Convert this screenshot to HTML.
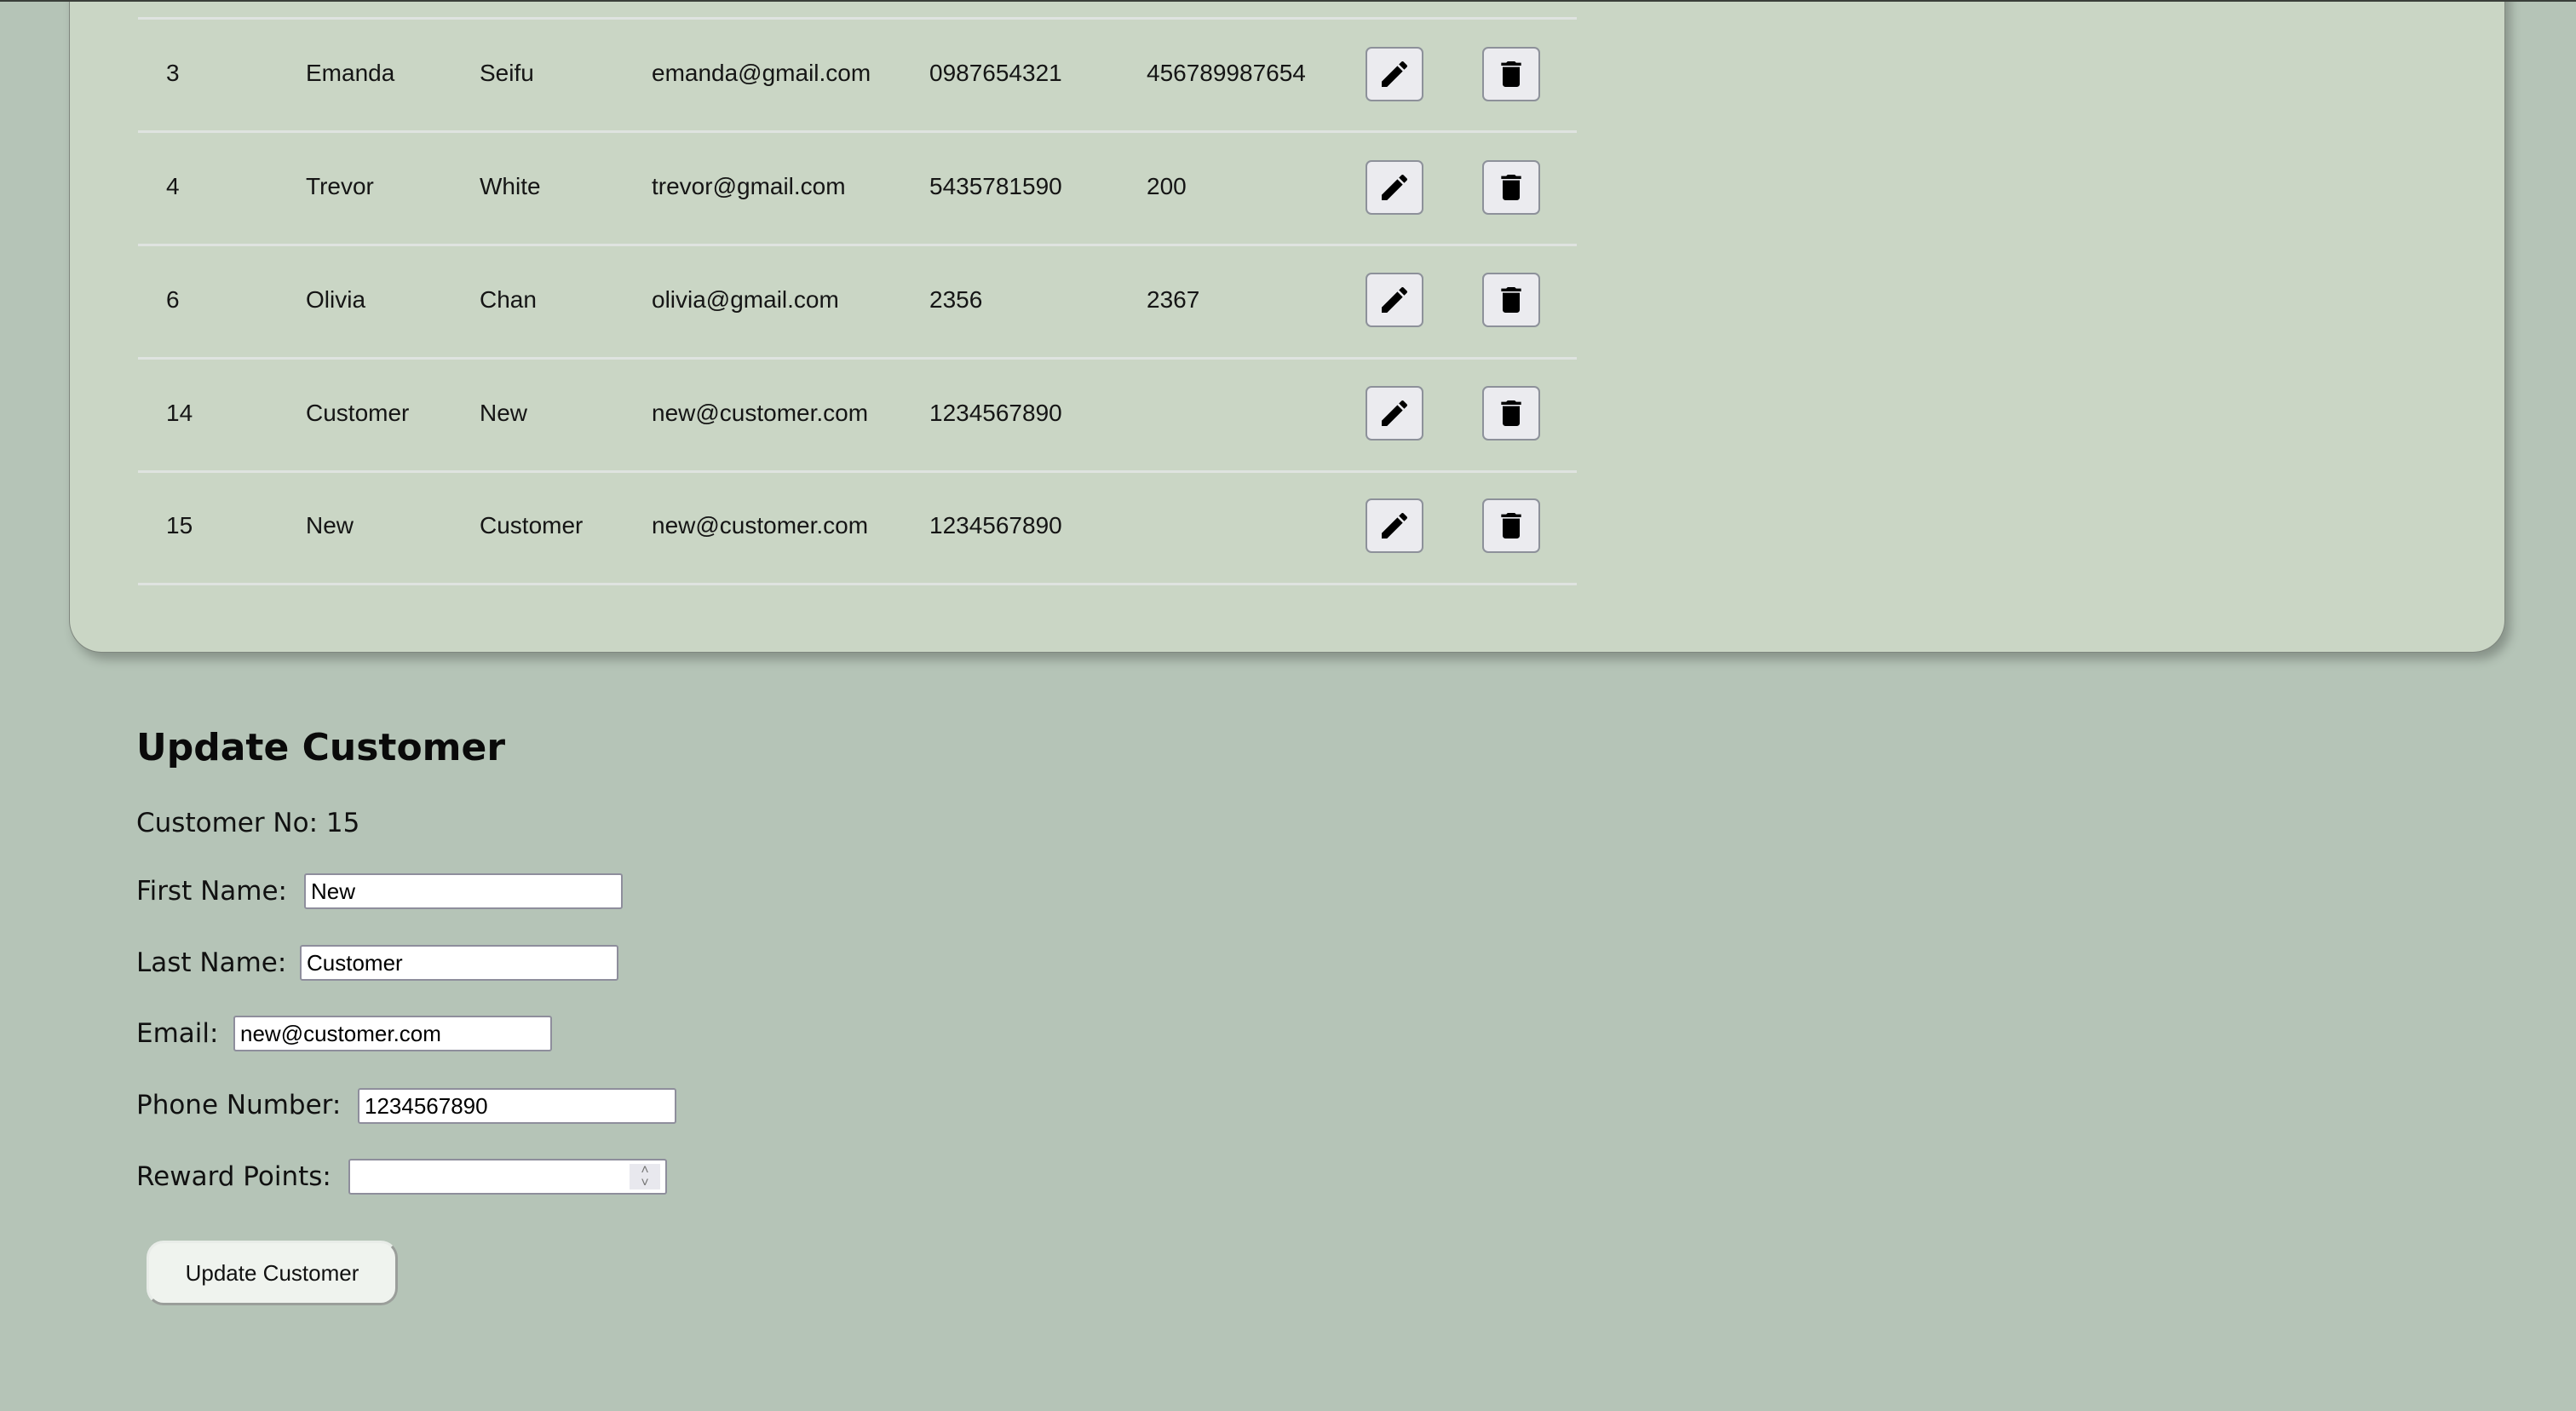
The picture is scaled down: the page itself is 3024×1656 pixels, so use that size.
<!DOCTYPE html>
<html><head><meta charset="utf-8"><style>
html,body{margin:0;padding:0}
body{width:3024px;height:1656px;background:#b5c4b7;position:relative;overflow:hidden;font-family:"Liberation Sans",sans-serif;color:#111}
.topline{position:absolute;left:0;top:0;width:3024px;height:2px;background:#3a3f3a}
.card{position:absolute;left:81px;top:-60px;width:2858px;height:825px;background:#cad6c5;border:1px solid #7f877f;border-top:none;border-radius:0 0 38px 38px;box-shadow:6px 8px 12px rgba(0,0,0,.25)}
.hl{position:absolute;left:162px;width:1689px;height:3px;background:#dfe3e0}
.t{position:absolute;font-size:28px;line-height:32px;color:#151515}
.btn{position:absolute;width:68px;height:64px;background:#ebebef;border:2px solid #8d919a;border-radius:7px;box-sizing:border-box;display:flex;align-items:center;justify-content:center}
.btn svg{width:40px;height:40px}
.f{font-family:"DejaVu Sans",sans-serif;position:absolute;left:160px;font-size:31px;color:#111}
h2{position:absolute;left:160px;top:852px;margin:0;font-family:"DejaVu Sans",sans-serif;font-weight:bold;font-size:44px;color:#0a0a0a}
.in{position:absolute;height:42px;width:374px;box-sizing:border-box;background:#fff;border:2px solid #8e8e9c;border-radius:3px;font-family:"Liberation Sans",sans-serif;font-size:26px;line-height:38px;padding-left:6px;color:#000}
.ub{position:absolute;left:172px;top:1456px;width:295px;height:76px;box-sizing:border-box;background:#eff3ee;border:3px solid #e8ece8;border-right-color:#9a9e9a;border-bottom-color:#9a9e9a;border-radius:20px;font-size:26px;text-align:center;line-height:70px;color:#111}
</style></head><body>
<div class="card"></div>
<div class="topline"></div>

<div class="hl" style="top:20px"></div>
<div class="hl" style="top:153px"></div>
<div class="hl" style="top:286px"></div>
<div class="hl" style="top:419px"></div>
<div class="hl" style="top:552px"></div>
<div class="hl" style="top:684px"></div>

<div class="t" style="left:195px;top:70px">3</div>
<div class="t" style="left:359px;top:70px">Emanda</div>
<div class="t" style="left:563px;top:70px">Seifu</div>
<div class="t" style="left:765px;top:70px">emanda@gmail.com</div>
<div class="t" style="left:1091px;top:70px">0987654321</div>
<div class="t" style="left:1346px;top:70px">456789987654</div>
<div class="t" style="left:195px;top:203px">4</div>
<div class="t" style="left:359px;top:203px">Trevor</div>
<div class="t" style="left:563px;top:203px">White</div>
<div class="t" style="left:765px;top:203px">trevor@gmail.com</div>
<div class="t" style="left:1091px;top:203px">5435781590</div>
<div class="t" style="left:1346px;top:203px">200</div>
<div class="t" style="left:195px;top:336px">6</div>
<div class="t" style="left:359px;top:336px">Olivia</div>
<div class="t" style="left:563px;top:336px">Chan</div>
<div class="t" style="left:765px;top:336px">olivia@gmail.com</div>
<div class="t" style="left:1091px;top:336px">2356</div>
<div class="t" style="left:1346px;top:336px">2367</div>
<div class="t" style="left:195px;top:469px">14</div>
<div class="t" style="left:359px;top:469px">Customer</div>
<div class="t" style="left:563px;top:469px">New</div>
<div class="t" style="left:765px;top:469px">new@customer.com</div>
<div class="t" style="left:1091px;top:469px">1234567890</div>
<div class="t" style="left:195px;top:601px">15</div>
<div class="t" style="left:359px;top:601px">New</div>
<div class="t" style="left:563px;top:601px">Customer</div>
<div class="t" style="left:765px;top:601px">new@customer.com</div>
<div class="t" style="left:1091px;top:601px">1234567890</div>

<div class="btn" style="left:1603px;top:55px"><svg viewBox="0 0 24 24"><path d="M3 17.25V21h3.75L17.81 9.94l-3.75-3.75L3 17.25zM20.71 7.04c.39-.39.39-1.02 0-1.41l-2.34-2.34c-.39-.39-1.02-.39-1.41 0l-1.83 1.83 3.75 3.750 1.83-1.83z"/></svg></div>
<div class="btn" style="left:1740px;top:55px"><svg viewBox="0 0 24 24"><path d="M6 19c0 1.1.9 2 2 2h8c1.1 0 2-.9 2-2V7H6v12zM19 4h-3.5l-1-1h-5l-1 1H5v2h14V4z"/></svg></div>
<div class="btn" style="left:1603px;top:188px"><svg viewBox="0 0 24 24"><path d="M3 17.25V21h3.75L17.81 9.94l-3.75-3.75L3 17.25zM20.71 7.04c.39-.39.39-1.02 0-1.41l-2.34-2.34c-.39-.39-1.02-.39-1.41 0l-1.83 1.83 3.75 3.75 1.83-1.83z"/></svg></div>
<div class="btn" style="left:1740px;top:188px"><svg viewBox="0 0 24 24"><path d="M6 19c0 1.1.9 2 2 2h8c1.1 0 2-.9 2-2V7H6v12zM19 4h-3.5l-1-1h-5l-1 1H5v2h14V4z"/></svg></div>
<div class="btn" style="left:1603px;top:320px"><svg viewBox="0 0 24 24"><path d="M3 17.25V21h3.75L17.81 9.94l-3.75-3.75L3 17.25zM20.71 7.04c.39-.39.39-1.02 0-1.41l-2.34-2.34c-.39-.39-1.02-.39-1.41 0l-1.83 1.83 3.75 3.75 1.83-1.83z"/></svg></div>
<div class="btn" style="left:1740px;top:320px"><svg viewBox="0 0 24 24"><path d="M6 19c0 1.1.9 2 2 2h8c1.1 0 2-.9 2-2V7H6v12zM19 4h-3.5l-1-1h-5l-1 1H5v2h14V4z"/></svg></div>
<div class="btn" style="left:1603px;top:453px"><svg viewBox="0 0 24 24"><path d="M3 17.25V21h3.75L17.81 9.94l-3.75-3.75L3 17.25zM20.71 7.04c.39-.39.39-1.02 0-1.41l-2.34-2.34c-.39-.39-1.02-.39-1.41 0l-1.83 1.83 3.75 3.75 1.83-1.83z"/></svg></div>
<div class="btn" style="left:1740px;top:453px"><svg viewBox="0 0 24 24"><path d="M6 19c0 1.1.9 2 2 2h8c1.1 0 2-.9 2-2V7H6v12zM19 4h-3.5l-1-1h-5l-1 1H5v2h14V4z"/></svg></div>
<div class="btn" style="left:1603px;top:585px"><svg viewBox="0 0 24 24"><path d="M3 17.25V21h3.75L17.81 9.94l-3.75-3.75L3 17.25zM20.71 7.04c.39-.39.39-1.02 0-1.41l-2.34-2.34c-.39-.39-1.02-.39-1.41 0l-1.83 1.83 3.75 3.75 1.83-1.83z"/></svg></div>
<div class="btn" style="left:1740px;top:585px"><svg viewBox="0 0 24 24"><path d="M6 19c0 1.1.9 2 2 2h8c1.1 0 2-.9 2-2V7H6v12zM19 4h-3.5l-1-1h-5l-1 1H5v2h14V4z"/></svg></div>

<h2>Update Customer</h2>
<div class="f" style="top:948px">Customer No: 15</div>
<div class="f" style="top:1028px">First Name:</div>
<div class="in" style="left:357px;top:1025px">New</div>
<div class="f" style="top:1112px">Last Name:</div>
<div class="in" style="left:352px;top:1109px">Customer</div>
<div class="f" style="top:1195px">Email:</div>
<div class="in" style="left:274px;top:1192px">new@customer.com</div>
<div class="f" style="top:1279px">Phone Number:</div>
<div class="in" style="left:420px;top:1277px">1234567890</div>
<div class="f" style="top:1363px">Reward Points:</div>
<div class="in" style="left:409px;top:1360px"><div style="position:absolute;right:6px;top:4px;width:36px;height:30px;background:#e8e8ee;text-align:center;font-size:16px;line-height:15px;color:#777">&#708;<br>&#709;</div></div>
<div class="ub">Update Customer</div>
</body></html>
